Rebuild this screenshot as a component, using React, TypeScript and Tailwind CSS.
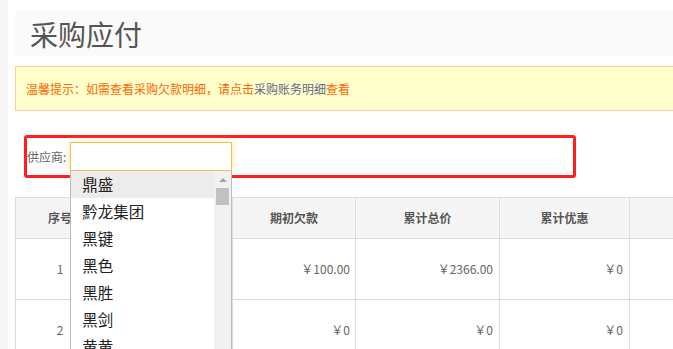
import React from "react";

const font = { fontFamily: '"Noto Sans CJK SC", "Noto Sans", "Liberation Sans", sans-serif' };

const options = ["鼎盛", "黔龙集团", "黑键", "黑色", "黑胜", "黑剑", "黄黄", "黄河"];

export default function App() {
  return (
    <div className="flex h-[349px] w-[673px] overflow-hidden bg-white" style={font}>
      <div className="w-[8px] shrink-0 bg-[#f7f7f7]" />
      <div className="min-w-0 flex-1 pl-[7px] pt-[11px]">
        <div className="flex h-[45px] w-[700px] items-center bg-[#fafafa] pl-[15px]">
          <span className="text-[28px] leading-none text-[#555]">采购应付</span>
        </div>
        <div className="mt-[10px] flex h-[45px] w-[700px] items-center border border-[#ffcc99] bg-[#ffffcc] pl-[10px] text-[12px] text-[#ff6600]">
          <span>
            温馨提示：如需查看采购欠款明细，请点击<span className="text-[#666688]">采购账务明细</span>查看
          </span>
        </div>
        <div className="relative z-10 mt-[31px] flex h-[29px] items-center pl-[12px]">
          <div className="pointer-events-none absolute -top-[7px] left-[9px] h-[43px] w-[552px] rounded-[3px] border-[3px] border-[#ff1f1f]" />
          <span className="text-[12px] text-[#666]">供应商:</span>
          <div className="relative ml-[4px] h-[29px] w-[162px]">
            <div className="h-full w-full border border-[#e8c254] bg-white shadow-[0_0_7px_rgba(240,200,80,0.55)]" />
            <div className="absolute left-0 top-full h-[200px] w-[162px] overflow-hidden border-x border-[#bbb] bg-white">
              <div className="pr-[17px]">
                {options.map((o, i) => (
                  <div
                    key={o}
                    className={`flex h-[27px] items-center pl-[11px] text-[15.5px] text-[#222] ${i === 0 ? "bg-[#ececec]" : ""}`}
                  >
                    {o}
                  </div>
                ))}
              </div>
              <div className="absolute bottom-0 right-0 top-0 w-[17px] bg-[#f1f1f1]">
                <div className="mx-auto mt-[7px] h-0 w-0 border-x-[4px] border-b-[4px] border-x-transparent border-b-[#a3a3a3]" />
                <div className="mx-[2px] mt-[6px] h-[17px] bg-[#c1c1c1]" />
              </div>
            </div>
          </div>
        </div>
        <table className="mt-[26px] w-[790px] table-fixed border-collapse text-[12px]">
          <colgroup>
            <col className="w-[89px]" />
            <col className="w-[128px]" />
            <col className="w-[123px]" />
            <col className="w-[144px]" />
            <col className="w-[130px]" />
            <col className="w-[176px]" />
          </colgroup>
          <thead>
            <tr className="h-[41px] bg-[#f5f5f5] font-bold text-[#555]">
              <th className="border border-[#ddd] text-center font-bold">序号</th>
              <th className="border border-[#ddd] text-center font-bold">供应商</th>
              <th className="border border-[#ddd] text-center font-bold">期初欠款</th>
              <th className="border border-[#ddd] text-center font-bold">累计总价</th>
              <th className="border border-[#ddd] text-center font-bold">累计优惠</th>
              <th className="border border-[#ddd] text-center font-bold"></th>
            </tr>
          </thead>
          <tbody className="text-[#666]">
            <tr className="h-[61px]">
              <td className="border border-[#ddd] text-center">1</td>
              <td className="border border-[#ddd] text-center">鼎盛</td>
              <td className="border border-[#ddd] pr-[5px] text-right">￥100.00</td>
              <td className="border border-[#ddd] pr-[6px] text-right">￥2366.00</td>
              <td className="border border-[#ddd] pr-[6px] text-right">￥0</td>
              <td className="border border-[#ddd] pr-[6px] text-right"></td>
            </tr>
            <tr className="h-[61px]">
              <td className="border border-[#ddd] text-center">2</td>
              <td className="border border-[#ddd] text-center">黔龙集团</td>
              <td className="border border-[#ddd] pr-[5px] text-right">￥0</td>
              <td className="border border-[#ddd] pr-[6px] text-right">￥0</td>
              <td className="border border-[#ddd] pr-[6px] text-right">￥0</td>
              <td className="border border-[#ddd] pr-[6px] text-right"></td>
            </tr>
          </tbody>
        </table>
      </div>
    </div>
  );
}
